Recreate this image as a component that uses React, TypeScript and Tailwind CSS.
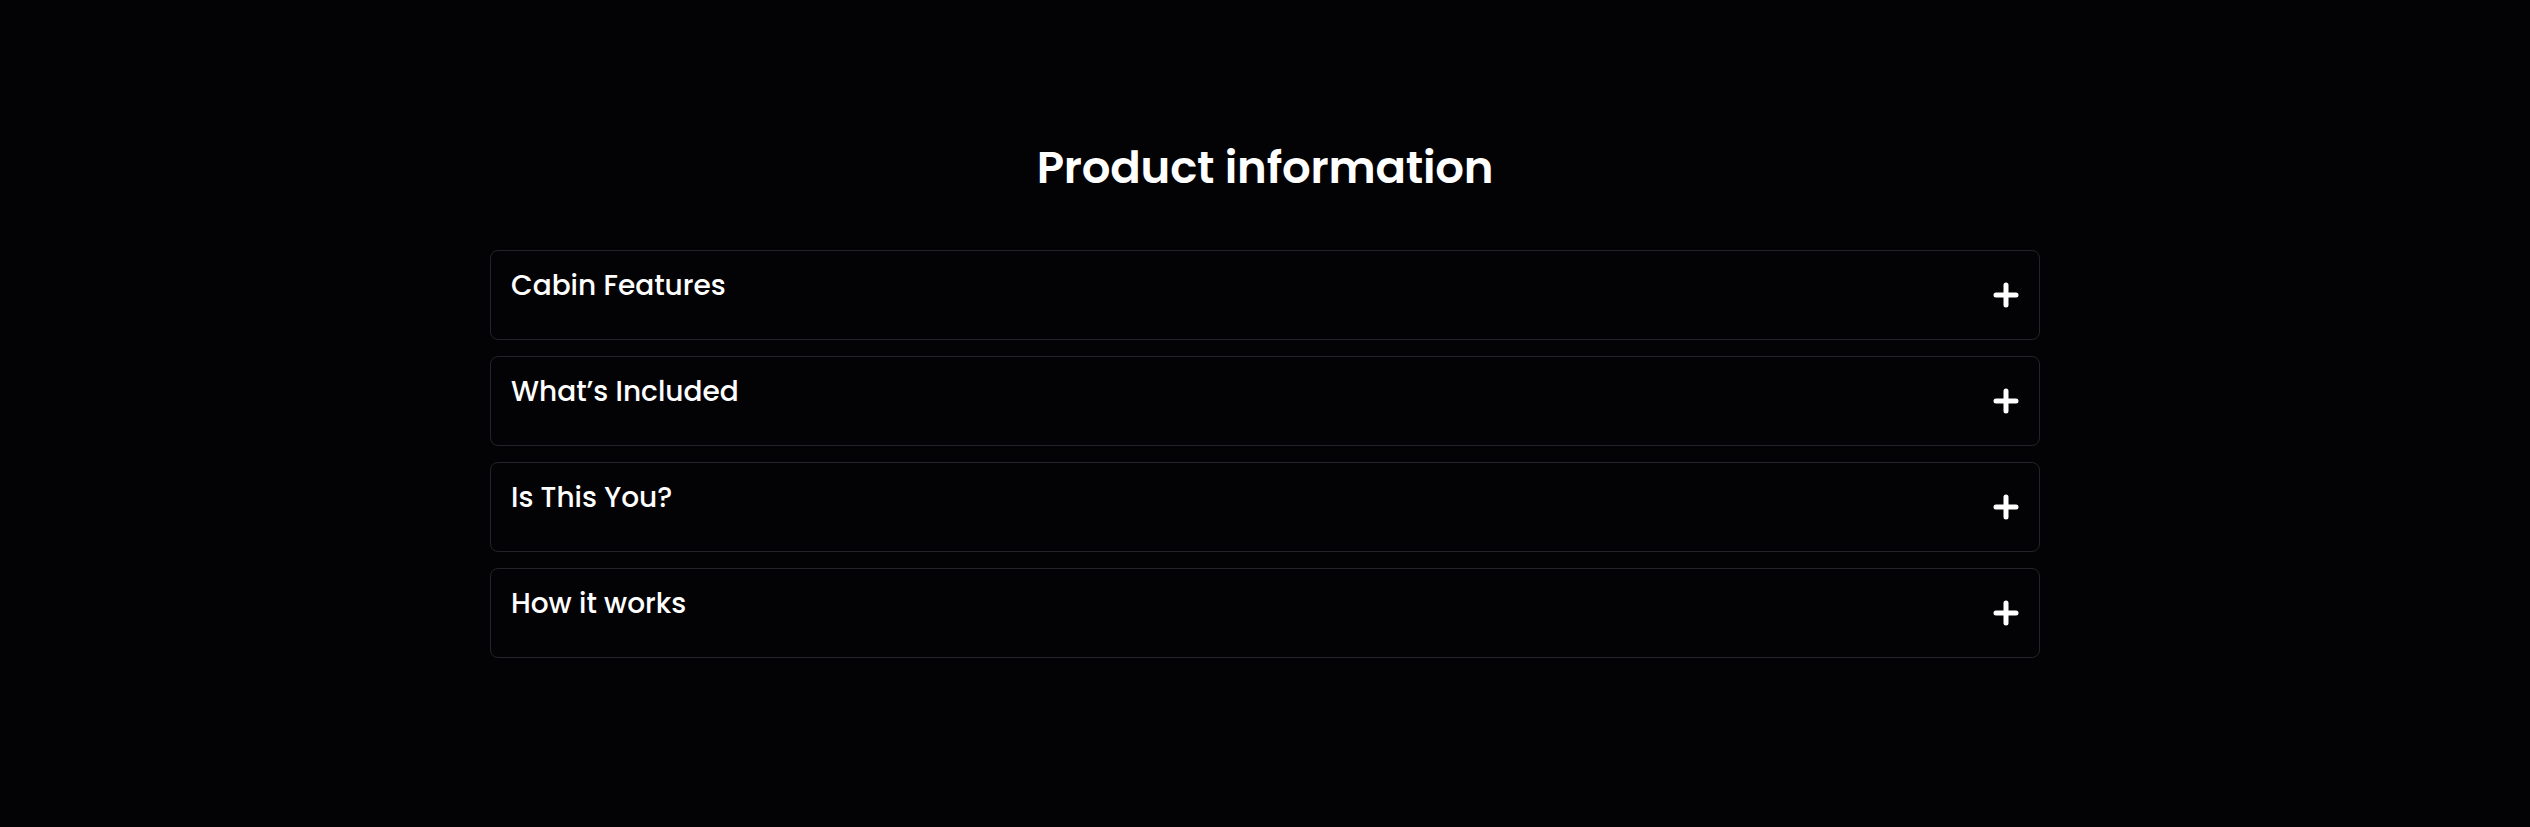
import React from "react";

const items = ["Cabin Features", "What’s Included", "Is This You?", "How it works"];

function Plus() {
  return (
    <svg width="26" height="26" viewBox="0 0 26 26" fill="none">
      <path d="M13 3v20M3 13h20" stroke="white" strokeWidth="5" strokeLinecap="round" />
    </svg>
  );
}

export default function App() {
  return (
    <div
      className="min-h-[827px] w-full bg-[#030204] text-white"
      style={{ fontFamily: "Poppins, Inter, 'Noto Sans', sans-serif" }}
    >
      <div className="mx-auto flex w-[1550px] flex-col pt-[140px]">
        <h2 className="text-center text-[45px] font-semibold leading-[56px] tracking-[-0.2px]">
          Product information
        </h2>
        <div className="mt-[54px] flex flex-col gap-[16px]">
          {items.map((t) => (
            <div
              key={t}
              className="flex h-[90px] items-start justify-between rounded-[8px] border border-[#232328] pl-[20px] pr-[20px] pt-[17px]"
            >
              <span className="text-[28px] font-medium leading-[36px]">{t}</span>
              <span className="mt-[14px]">
                <Plus />
              </span>
            </div>
          ))}
        </div>
      </div>
    </div>
  );
}
